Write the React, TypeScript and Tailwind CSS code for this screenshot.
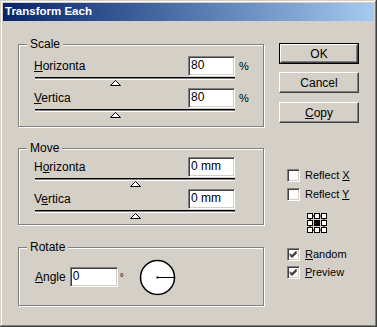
import React from 'react';

// classic win2k bevels
const sunken =
  'border border-t-[#808080] border-l-[#808080] border-b-white border-r-white shadow-[inset_1px_1px_0_#404040,inset_-1px_-1px_0_#d4d0c8]';
const raised =
  'border border-t-white border-l-white border-b-[#404040] border-r-[#404040] shadow-[inset_-1px_-1px_0_#808080,inset_1px_1px_0_#d4d0c8]';
const etched =
  'border border-[#808080] shadow-[inset_1px_1px_0_#fff,1px_1px_0_#fff]';

const Slider = ({ thumb }: { thumb: number }) => (
  <div className="h-[12px] pl-[16px] pt-[1px]">
    <div className="w-[200px] h-[3px] border-t border-black bg-[#808080] border-b border-b-white" />
    <svg width="11" height="6" className="block" style={{ marginLeft: thumb }}>
      <polygon points="5.5,0.5 10.5,5.5 0.5,5.5" fill="#fff" stroke="#000" strokeWidth="1" />
    </svg>
  </div>
);

const Row = ({
  label,
  value,
  suffix,
}: {
  label: React.ReactNode;
  value: string;
  suffix?: string;
}) => (
  <div className="flex items-center h-[20px] pl-[15px]">
    <span className="flex-1">{label}</span>
    <div className={`${sunken} w-[47px] h-[20px] bg-white pl-[2px] text-[12px] leading-[17px]`}>{value}</div>
    <span className="w-[28px] pl-[4px] text-[11px]">{suffix}</span>
  </div>
);

const Group = ({ title, children, className = '' }: { title: string; children: React.ReactNode; className?: string }) => (
  <fieldset className={`${etched} ${className}`}>
    <legend className="ml-[8px] px-[3px] leading-[14px] bg-[#d4d0c8]">{title}</legend>
    {children}
  </fieldset>
);

const Check = ({ checked, children }: { checked?: boolean; children: React.ReactNode }) => (
  <div className="flex items-center h-[13px] gap-[5px] text-[11px]">
    <div className={`${sunken} w-[13px] h-[13px] bg-white`}>
      {checked && (
        <svg width="11" height="11" viewBox="0 0 11 11" className="block">
          <path d="M2 4.5 L4 6.5 L8.5 2 M2 5.5 L4 7.5 L8.5 3 M2 6.5 L4 8.5 L8.5 4" stroke="#000" strokeWidth="1" fill="none" />
        </svg>
      )}
    </div>
    <span>{children}</span>
  </div>
);

const Btn = ({ children, def }: { children: React.ReactNode; def?: boolean }) => (
  <div className={def ? 'border border-black' : ''}>
    <div
      className={`${raised} ${def ? 'h-[19px] w-[78px]' : 'h-[21px] w-[80px]'} flex items-center justify-center text-[12px]`}
    >
      {children}
    </div>
  </div>
);

export default function App() {
  return (
    <div className="w-[377px] h-[327px] bg-[#d4d0c8] font-['Liberation_Sans',Arial,sans-serif] text-[12px] text-black flex flex-col shadow-[inset_-1px_-1px_0_#404040,inset_1px_1px_0_#d4d0c8,inset_-2px_-2px_0_#808080,inset_2px_2px_0_#fff]">
      <div className="mx-[3px] mt-[3px] h-[18px] bg-linear-to-r from-[#0a246a] to-[#a6caf0] flex items-center pl-[2px]">
        <span className="text-white font-bold text-[11.5px]">Transform Each</span>
      </div>

      <div className="flex pl-[18px] pt-[16px]">
        {/* left column */}
        <div className="w-[246px] flex flex-col">
          <Group title="Scale" className="pt-[5px] pb-[6px]">
            <Row label={<><span className="underline">H</span>orizonta</>} value="80" suffix="%" />
            <Slider thumb={75} />
            <Row label={<><span className="underline">V</span>ertica</>} value="80" suffix="%" />
            <Slider thumb={75} />
          </Group>

          <Group title="Move" className="mt-[14px] pt-[2px] pb-[3px]">
            <Row label={<>H<span className="underline">o</span>rizonta</>} value="0 mm" />
            <Slider thumb={95} />
            <Row label={<>V<span className="underline">e</span>rtica</>} value="0 mm" />
            <Slider thumb={95} />
          </Group>

          <Group title="Rotate" className="mt-[15px] pt-[5px] pb-[10px]">
            <div className="flex items-center h-[36px] pl-[16px]">
              <span>
                <span className="underline">A</span>ngle
              </span>
              <div className={`${sunken} ml-[4px] w-[48px] h-[20px] bg-white pl-[2px] text-[12px] leading-[17px]`}>0</div>
              <span className="ml-[2px] self-start mt-[11px] text-[10px]">°</span>
              <svg width="37" height="37" className="ml-[15px]">
                <circle cx="18.5" cy="18.5" r="17" fill="#fff" stroke="#000" strokeWidth="1.5" />
                <line x1="18.5" y1="18.5" x2="35" y2="18.5" stroke="#000" strokeWidth="1" />
                <rect x="17.5" y="17.5" width="2" height="2" fill="#000" />
              </svg>
            </div>
          </Group>
        </div>

        {/* right column */}
        <div className="ml-[15px] pt-[6px] flex flex-col">
          <Btn def>OK</Btn>
          <div className="mt-[8px]">
            <Btn>Cancel</Btn>
          </div>
          <div className="mt-[9px]">
            <Btn>
              <span>
                <span className="underline">C</span>opy
              </span>
            </Btn>
          </div>

          <div className="ml-[8px] mt-[46px] flex flex-col gap-[6px]">
            <Check>
              Reflect <span className="underline">X</span>
            </Check>
            <Check>
              Reflect <span className="underline">Y</span>
            </Check>
          </div>

          <svg width="20" height="20" className="ml-[28px] mt-[12px]" viewBox="0 0 20 20">
            <rect x="3" y="3" width="14" height="14" fill="none" stroke="#000" strokeWidth="1" />
            {[0.5, 7.5, 14.5].map((y) =>
              [0.5, 7.5, 14.5].map((x) => (
                <rect
                  key={`${x}-${y}`}
                  x={x}
                  y={y}
                  width="5"
                  height="5"
                  fill={x === 7.5 && y === 7.5 ? '#000' : '#fff'}
                  stroke="#000"
                  strokeWidth="1"
                />
              ))
            )}
          </svg>

          <div className="ml-[8px] mt-[15px] flex flex-col gap-[5px]">
            <Check checked>
              <span className="underline">R</span>andom
            </Check>
            <Check checked>
              <span className="underline">P</span>review
            </Check>
          </div>
        </div>
      </div>
    </div>
  );
}
